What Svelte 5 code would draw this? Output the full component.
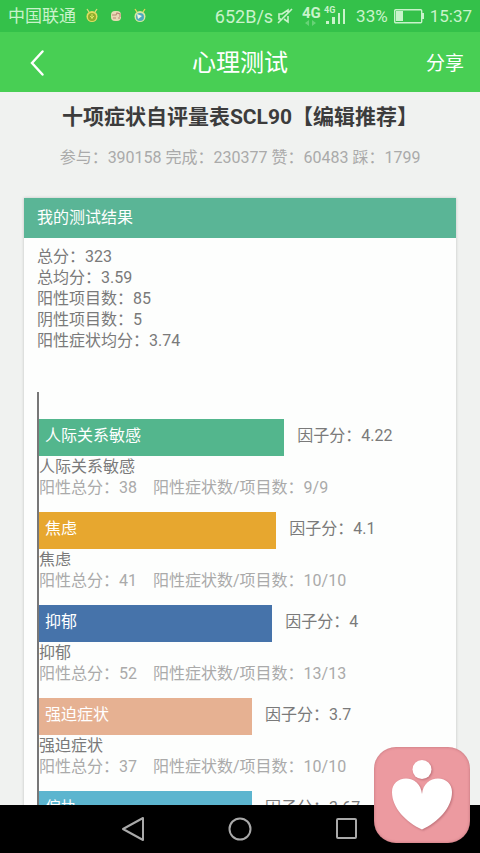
<script>
  const stats = [
    { label: "总分", value: "323" },
    { label: "总均分", value: "3.59" },
    { label: "阳性项目数", value: "85" },
    { label: "阴性项目数", value: "5" },
    { label: "阳性症状均分", value: "3.74" },
  ];

  const factors = [
    { name: "人际关系敏感", score: "4.22", width: 61, color: "#53b68d", total: 38, items: "9/9" },
    { name: "焦虑", score: "4.1", width: 59, color: "#e7a72f", total: 41, items: "10/10" },
    { name: "抑郁", score: "4", width: 58, color: "#4673aa", total: 52, items: "13/13" },
    { name: "强迫症状", score: "3.7", width: 53, color: "#e6b192", total: 37, items: "10/10" },
    { name: "偏执", score: "3.67", width: 53, color: "#5cb5cf", total: 22, items: "6/6" },
  ];
</script>

<div class="screen">
  <div class="status">
    <span class="carrier">中国联通</span>
    <svg class="badges" width="62" height="16" viewBox="0 0 62 16">
      <path d="M5 4L3 1M11 4l2-3" stroke="#d9dc7a" stroke-width="1.3" />
      <circle cx="8" cy="8.500" r="5.500" fill="#e3dc62" />
      <circle cx="8" cy="9" r="4" fill="#8fae2c" />
      <path d="M8 6v5M6 8l2 2 2-2" stroke="#d8e86a" fill="none" />
      <rect x="27" y="3" width="10" height="10" rx="4" fill="#e8d9b4" />
      <path d="M28 7h4l1-2 3 1v3M29 10h3M34 10h2" stroke="#b98a74" stroke-width="1.1" fill="none" />
      <path d="M53 4l-2-3M59 4l2-3" stroke="#e6d75a" stroke-width="1.3" />
      <circle cx="56" cy="8.500" r="5.500" fill="#d6e8a0" />
      <circle cx="56" cy="9" r="4" fill="#4ea9c0" />
      <path d="M53 6l5 2-4 3z" fill="#eef7e0" />
    </svg>
    <span class="speed">652B/s</span>
    <svg class="mute" width="16" height="16" viewBox="0 0 16 16" fill="none" stroke="#c9f3cb" stroke-width="1.6">
      <path d="M4 11H2V6h3l6-4v3M11 8v6l-4-3M15 1L1 15" />
    </svg>
    <svg class="signal" width="46" height="24" viewBox="0 0 46 24" fill="#c9f3cb">
      <text x="0" y="14" font-size="15" font-weight="700">4G</text>
      <path d="M7 16v6l-4-3zM10 16v6l4-3z" opacity="0.35" />
      <text x="22" y="9" font-size="9" font-weight="700">4G</text>
      <path d="M24 17h3v3h-3zM30 13h3v7h-3zM36 9h2v11h-2zM41 5h2v15h-2z" />
    </svg>
    <span class="percent">33%</span>
    <svg class="battery" width="30" height="16" viewBox="0 0 30 16">
      <rect x="0.700" y="1.700" width="27" height="13" rx="1" fill="none" stroke="#c9f3cb" stroke-width="1.4" />
      <rect x="2" y="3" width="7" height="10" fill="#c9f3cb" />
      <path d="M28 5h2v6h-2z" fill="#c9f3cb" />
    </svg>
    <span class="time">15:37</span>
  </div>

  <header class="topbar">
    <button class="back" aria-label="返回">
      <svg width="14" height="28" viewBox="0 0 14 28">
        <path d="M12.500 2.500L2 14l10.500 11.500" fill="none" stroke="#fff" stroke-width="2.4" stroke-linecap="round" />
      </svg>
    </button>
    <h1>心理测试</h1>
    <button class="share">分享</button>
  </header>

  <main>
    <h2>十项症状自评量表SCL90【编辑推荐】</h2>
    <p class="counts">参与：390158 完成：230377 赞：60483 踩：1799</p>

    <section class="card">
      <h3>我的测试结果</h3>
      <div class="result">
        {#each stats as stat}
          <p>{stat.label}：{stat.value}</p>
        {/each}
        <div class="chart">
          {#each factors as factor}
            <div class="factor">
              <div class="row">
                <div class="bar" style="width: {factor.width}%; background: {factor.color}">{factor.name}</div>
                <span class="score">因子分：{factor.score}</span>
              </div>
              <p>{factor.name}</p>
              <p class="detail">
                <span>阳性总分：{factor.total}</span>
                <span>阳性症状数/项目数：{factor.items}</span>
              </p>
            </div>
          {/each}
        </div>
      </div>
    </section>
  </main>

  <nav>
    <button aria-label="后退">
      <svg width="26" height="26" viewBox="0 0 26 26">
        <path d="M23 2v22L3 13z" />
      </svg>
    </button>
    <button aria-label="主页">
      <svg width="26" height="26" viewBox="0 0 26 26">
        <circle cx="13" cy="13" r="10.500" />
      </svg>
    </button>
    <button aria-label="最近任务">
      <svg width="26" height="26" viewBox="0 0 26 26">
        <rect x="3" y="3" width="19" height="19" rx="1" />
      </svg>
    </button>
  </nav>

  <button class="float" aria-label="心理">
    <svg width="96" height="96" viewBox="0 0 96 96">
      <g fill="#fff">
        <circle cx="48" cy="22.500" r="9.500" />
        <path d="M48 47C47 37 40 31.500 32 31.500C24 31.500 18 37 18 45C18 61 32 75 48 82.500C64 75 78 61 78 45C78 37 72 31.500 64 31.500C56 31.500 49 37 48 47Z" />
      </g>
    </svg>
  </button>
</div>

<style>
  :global(body) {
    margin: 0;
  }

  .screen {
    position: relative;
    display: flex;
    flex-direction: column;
    height: 100vh;
    overflow: hidden;
    background: #f0f2f0;
    color: #7a7a7a;
    font-family: Roboto, "Noto Sans CJK SC", sans-serif;
    font-size: 16px;
    line-height: 21px;
  }

  h1, h2, h3, p {
    margin: 0;
    font-weight: 400;
  }

  button {
    display: flex;
    align-items: center;
    justify-content: center;
    padding: 0;
    border: 0;
    background: none;
    color: inherit;
    font: inherit;
  }

  svg {
    display: block;
    flex: none;
  }

  .status {
    display: flex;
    align-items: center;
    flex: none;
    height: 32px;
    padding: 0 8px;
    background: #34c14a;
    color: #c9f3cb;
    font-size: 17px;
  }

  .badges {
    margin-left: 8px;
  }

  .speed {
    margin-left: auto;
    font-size: 18px;
  }

  .mute {
    margin: 0 9px 0 4px;
  }

  .percent {
    margin: 0 6px;
  }

  .time {
    margin-left: 6px;
  }

  .signal {
    margin-right: 2px;
  }

  .topbar {
    display: grid;
    grid-template-columns: 1fr auto 1fr;
    align-items: center;
    flex: none;
    box-sizing: border-box;
    height: 60px;
    padding: 2px 16px 0 30px;
    background: #48cf54;
    color: #fff;
  }

  .back {
    justify-self: start;
  }

  .topbar h1 {
    font-size: 24px;
    line-height: 32px;
    padding-right: 14px;
  }

  .share {
    justify-self: end;
    font-size: 19px;
  }

  main {
    flex: 1;
    min-height: 0;
    overflow: hidden;
    padding: 10px 24px 0;
  }

  h2 {
    color: #3c3c3c;
    font-size: 21px;
    font-weight: 700;
    line-height: 30px;
    text-align: center;
  }

  .counts {
    margin: 15px 0 30px;
    color: #aaa;
    text-align: center;
  }

  .card {
    background: #fdfefd;
    box-shadow: 0 0 3px rgba(0, 0, 0, 0.2);
  }

  h3 {
    padding: 0 13px;
    background: #5ab596;
    color: #fff;
    font-size: 16px;
    line-height: 40px;
  }

  .result {
    padding: 8px 15px 0 13px;
  }

  .chart {
    margin-top: 41px;
    padding-top: 27px;
    border-left: 2px solid #777;
  }

  .factor {
    padding-bottom: 14px;
  }

  .row {
    display: flex;
  }

  .bar {
    flex: none;
    box-sizing: border-box;
    height: 37px;
    padding: 6px 6px;
    color: #fff;
  }

  .score {
    padding: 6px 0 0 13px;
  }

  .detail {
    display: flex;
    gap: 16px;
    color: #aaa;
  }

  nav {
    display: flex;
    align-items: center;
    justify-content: center;
    gap: 81px;
    flex: none;
    height: 48px;
    background: #000;
  }

  nav svg {
    fill: none;
    stroke: #a9a9a9;
    stroke-width: 2;
    stroke-linejoin: round;
  }

  .float {
    position: absolute;
    right: 10px;
    bottom: 10px;
    border-radius: 22px;
    background: #ec9aa0;
    box-shadow: inset 0 0 3px rgba(120, 50, 60, 0.4);
  }

  .float g {
    filter: drop-shadow(1px 1px 1px rgba(120, 50, 60, 0.4));
  }
</style>
